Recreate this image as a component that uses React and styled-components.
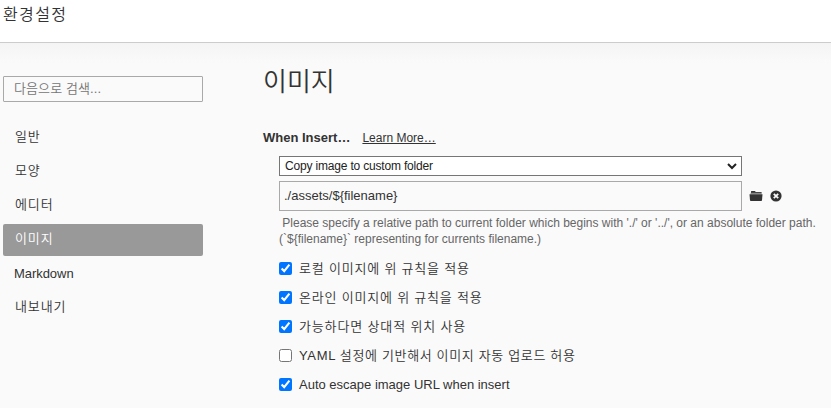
import React from "react";
import styled, { createGlobalStyle } from "styled-components";

const GlobalStyle = createGlobalStyle`
  * { box-sizing: border-box; }
  body {
    margin: 0;
    background: #fafafa;
    color: #333;
    font-family: "Liberation Sans", "Noto Sans CJK KR", sans-serif;
    font-size: 13px;
    overflow: hidden;
  }
`;

const Page = styled.div`
  height: 408px;
  display: flex;
  flex-direction: column;
  overflow: hidden;
`;

const Header = styled.header`
  flex: none;
  height: 43px;
  padding: 0 3px;
  background: #fff;
  border-bottom: 1px solid #ccc;
  font-size: 16px;
  font-weight: 350;
  line-height: 30px;
  letter-spacing: 1.4px;
`;

const Body = styled.div`
  flex: 1;
  display: flex;
  background: linear-gradient(#f4f4f4, #fafafa 20px);
`;

const Sidebar = styled.aside`
  width: 200px;
  margin: 33px 0 0 3px;
`;

const SearchInput = styled.input`
  display: block;
  width: 200px;
  height: 26px;
  margin: 0 0 20px;
  padding: 0 10px 2px;
  border: 1px solid #a9a9a9;
  border-radius: 1px;
  background: transparent;
  font: inherit;
  font-weight: 350;
  letter-spacing: 0.1px;
  outline: none;
  &::placeholder { color: #757575; }
`;

const Nav = styled.nav`
  display: flex;
  flex-direction: column;
  gap: 2px;
`;

const NavItem = styled.a`
  height: 32px;
  padding-left: ${(p) => (p.$latin ? "11px" : "12px")};
  border-radius: 2px;
  line-height: ${(p) => (p.$latin ? "31px" : "30px")};
  font-size: 13px;
  font-weight: 350;
  letter-spacing: ${(p) => (p.$latin ? "-0.05px" : "0.9px")};
  background: ${(p) => (p.$active ? "#999" : "transparent")};
  color: ${(p) => (p.$active ? "#fff" : "#333")};
`;

const Content = styled.main`
  margin-left: 60px;
  width: 568px;
  flex: none;
`;

const Title = styled.h1`
  height: 34px;
  margin: 22px 0 28px;
  font-size: 26px;
  font-weight: 350;
  line-height: 34px;
  letter-spacing: 0;
`;

const SectionHead = styled.div`
  display: flex;
  gap: 12px;
  height: 29px;
  line-height: 22px;
`;

const SectionTitle = styled.strong`
  letter-spacing: 0;
`;

const LearnMore = styled.a`
  font-size: 12px;
  text-decoration: underline;
`;

const Fields = styled.div`
  margin-left: 16px;
`;

const SelectBox = styled.div`
  display: flex;
  align-items: center;
  justify-content: space-between;
  width: 463px;
  height: 20px;
  padding: 0 3px 0 5px;
  border: 1px solid #767676;
  background: #fff;
  color: #222;
  font-size: 12px;
  letter-spacing: -0.18px;
`;

const PathRow = styled.div`
  display: flex;
  align-items: center;
  margin-top: 5px;
`;

const PathInput = styled.input`
  width: 463px;
  height: 30px;
  margin: 0;
  padding: 0 5px 1px 4px;
  border: 1px solid #a9a9a9;
  background: transparent;
  color: #333;
  font: inherit;
  outline: none;
`;

const Icon = styled.svg`
  flex: none;
  width: ${(p) => p.$w}px;
  height: 12px;
  margin-left: ${(p) => p.$gap}px;
`;

const Help = styled.p`
  height: 32px;
  margin: 4px 0 6px;
  color: #666;
  font-size: 12px;
  line-height: 16px;
  white-space: pre;
`;

const Option = styled.label`
  display: flex;
  align-items: center;
  height: 29px;
  font-weight: 350;
  letter-spacing: ${(p) => p.$spacing || 0}px;
`;

const Check = styled.input`
  width: 13px;
  height: 13px;
  margin: 1px 7px 0 0;
`;

const OptionText = styled.span`
  padding-top: 2px;
  line-height: 20px;
  white-space: nowrap;
`;

const navItems = ["일반", "모양", "에디터", "이미지", "Markdown", "내보내기"];

const options = [
  { text: "로컬 이미지에 위 규칙을 적용", checked: true, spacing: 0.8 },
  { text: "온라인 이미지에 위 규칙을 적용", checked: true, spacing: 0.8 },
  { text: "가능하다면 상대적 위치 사용", checked: true, spacing: 0.85 },
  { text: "YAML 설정에 기반해서 이미지 자동 업로드 허용", checked: false, spacing: 0.65 },
  { text: "Auto escape image URL when insert", checked: true, spacing: 0 },
];

export default function App() {
  return (
    <Page>
      <GlobalStyle />
      <Header>환경설정</Header>
      <Body>
        <Sidebar>
          <SearchInput placeholder="다음으로 검색..." />
          <Nav>
            {navItems.map((item) => (
              <NavItem key={item} $active={item === "이미지"} $latin={item === "Markdown"}>
                {item}
              </NavItem>
            ))}
          </Nav>
        </Sidebar>
        <Content>
          <Title>이미지</Title>
          <SectionHead>
            <SectionTitle>When Insert…</SectionTitle>
            <LearnMore>Learn More…</LearnMore>
          </SectionHead>
          <Fields>
            <SelectBox>
              Copy image to custom folder
              <Icon $w={12} $gap={0} viewBox="0 0 12 12">
                <path d="M2 4l4 4 4-4" fill="none" stroke="#222" strokeWidth="2" />
              </Icon>
            </SelectBox>
            <PathRow>
              <PathInput defaultValue="./assets/${filename}" />
              <Icon $w={14} $gap={7} viewBox="0 0 14 12">
                <path d="M2 3V1.600Q2 1 2.600 1h3q.6 0 .8.6L6.700 2H12q.7 0 .7.800V3z" fill="#333" />
                <path d="M1.700 2.800h11v1.500H1.400z" fill="#888" />
                <path d="M.5 4.300h13L13 10.300q-.1.700-.8.700H1.800q-.7 0-.8-.7z" fill="#333" />
              </Icon>
              <Icon $w={12} $gap={7} viewBox="0 0 12 12">
                <circle cx="6" cy="6" r="5.600" fill="#333" />
                <path d="M3.800 3.800l4.400 4.400M8.200 3.800l-4.400 4.400" stroke="#fafafa" strokeWidth="1.800" />
              </Icon>
            </PathRow>
            <Help>
              {" Please specify a relative path to current folder which begins with './' or '../', or an absolute folder path.\n(`${filename}` representing for currents filename.)"}
            </Help>
            {options.map((o) => (
              <Option key={o.text} $spacing={o.spacing}>
                <Check type="checkbox" defaultChecked={o.checked} />
                <OptionText>{o.text}</OptionText>
              </Option>
            ))}
          </Fields>
        </Content>
      </Body>
    </Page>
  );
}
